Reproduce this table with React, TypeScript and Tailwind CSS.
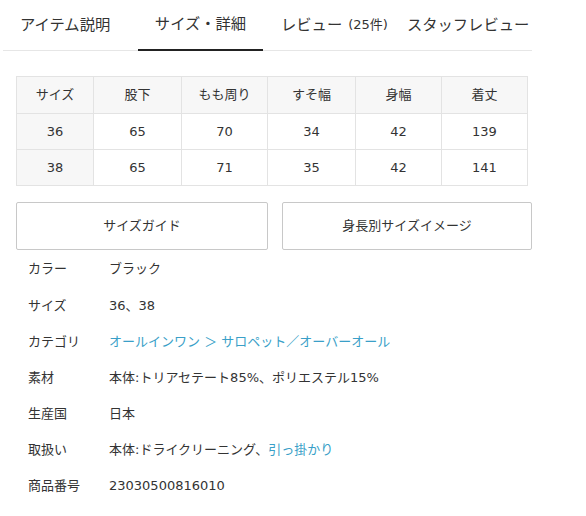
import React from "react";

const font = { fontFamily: '"DejaVu Sans", "Noto Sans CJK JP", sans-serif' };

const headers = ["サイズ", "股下", "もも周り", "すそ幅", "身幅", "着丈"];
const rows = [
  ["36", "65", "70", "34", "42", "139"],
  ["38", "65", "71", "35", "42", "141"],
];

export default function App() {
  return (
    <div className="w-[586px] h-[516px] bg-white text-[#333] overflow-hidden" style={font}>
      {/* Tabs */}
      <div className="ml-[3px] w-[529px] h-[51px] flex border-b border-[#e6e6e6] text-[15.3px]">
        <div className="w-[135px] pl-[17px] flex items-center">アイテム説明</div>
        <div className="w-[125px] flex items-center justify-center border-b-2 border-[#222] -mb-px">サイズ・詳細</div>
        <div className="pl-[18px] flex items-center">
          レビュー<span className="text-[13px] ml-[6px]">(25件)</span>
        </div>
        <div className="pl-[19px] flex items-center">スタッフレビュー</div>
      </div>

      {/* Table */}
      <div className="ml-[16px] mt-[25px] w-[512px] grid grid-cols-[77px_88px_86px_88px_86px_86px] border-l border-t border-[#e3e3e3] text-[13px]">
        {headers.map((h) => (
          <div key={h} className="h-[37px] flex items-center justify-center bg-[#f7f7f7] border-r border-b border-[#e3e3e3]">
            {h}
          </div>
        ))}
        {rows.map((r, ri) =>
          r.map((c, ci) => (
            <div
              key={ri + "-" + ci}
              className={
                "h-[36px] flex items-center justify-center border-r border-b border-[#e3e3e3] " +
                (ci === 0 ? "bg-[#f7f7f7]" : "bg-white")
              }
            >
              {c}
            </div>
          ))
        )}
      </div>

      {/* Buttons */}
      <div className="ml-[16px] mt-[16px] flex gap-[14px] text-[13px]">
        <div className="w-[252px] h-[48px] flex items-center justify-center border border-[#c8c8c8] rounded-[2px]">
          サイズガイド
        </div>
        <div className="w-[250px] h-[48px] flex items-center justify-center border border-[#c8c8c8] rounded-[2px]">
          身長別サイズイメージ
        </div>
      </div>

      {/* Details */}
      <div className="mt-[1px] text-[13px]">
        {[
          ["カラー", <>ブラック</>],
          ["サイズ", <>36、38</>],
          [
            "カテゴリ",
            <span className="text-[#3a9fc8]">オールインワン ＞ サロペット／オーバーオール</span>,
          ],
          ["素材", <>本体:トリアセテート85%、ポリエステル15%</>],
          ["生産国", <>日本</>],
          [
            "取扱い",
            <>
              本体:ドライクリーニング、<span className="text-[#3a9fc8]">引っ掛かり</span>
            </>,
          ],
          ["商品番号", <>23030500816010</>],
        ].map(([label, value], i) => (
          <div key={i} className="h-[36.2px] flex items-center pl-[28px]">
            <div className="w-[81px]">{label}</div>
            <div>{value}</div>
          </div>
        ))}
      </div>
    </div>
  );
}
